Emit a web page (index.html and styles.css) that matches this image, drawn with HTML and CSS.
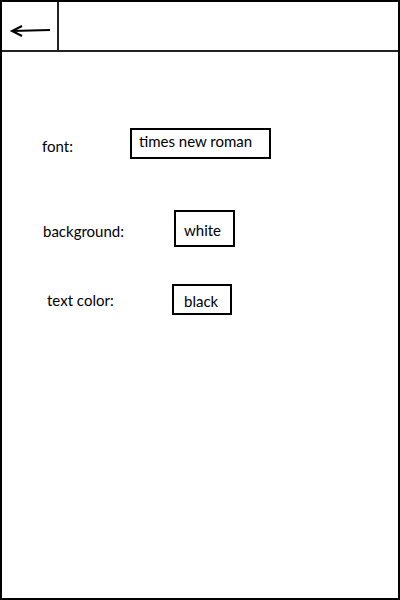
FILE: index.html
```html
<!DOCTYPE html>
<html lang="en">
<head>
    <meta charset="UTF-8">
    <meta name="viewport" content="width=device-width, initial-scale=1.0">
    <title>Settings</title>
    <link rel="stylesheet" href="styles.css">
</head>
<body>
    <div class="screen">
        <div class="topbar">
            <div class="back">
                <svg width="55" height="48" viewBox="0 0 55 48">
                    <line x1="10" y1="29" x2="48" y2="28" stroke="#000" stroke-width="2"/>
                    <polyline points="20,24 10,29 20,34" fill="none" stroke="#000" stroke-width="2"/>
                </svg>
            </div>
            <div class="title"></div>
        </div>
        <div class="content">
            <div class="row row-font">
                <span class="label">font:</span>
                <span class="box">times new roman</span>
            </div>
            <div class="row row-bg">
                <span class="label">background:</span>
                <span class="box">white</span>
            </div>
            <div class="row row-color">
                <span class="label">text color:</span>
                <span class="box">black</span>
            </div>
        </div>
    </div>
</body>
</html>
```

FILE: styles.css
```css
body {
    margin: 0;
    font-family: Lato, "Open Sans", sans-serif;
    font-size: 15px;
    line-height: 20px;
    color: #000;
}

.screen {
    width: 400px;
    height: 600px;
    box-sizing: border-box;
    border: 2px solid #000;
    background: #fff;
}

.topbar {
    display: flex;
    height: 50px;
    box-sizing: border-box;
    border-bottom: 2px solid #222;
}

.back {
    width: 57px;
    box-sizing: border-box;
    border-right: 2px solid #222;
}

.back svg {
    display: block;
}

.content {
    padding-top: 76px;
}

.row {
    display: flex;
    align-items: flex-start;
}

.box {
    box-sizing: border-box;
    border: 2px solid #000;
}

/* font */
.row-font .label {
    margin-left: 40px;
    margin-top: 8px;
    width: 88px;
}

.row-font .box {
    width: 141px;
    height: 31px;
    padding: 1px 0 0 7px;
}

/* background */
.row-bg {
    margin-top: 51px;
}

.row-bg .label {
    margin-left: 41px;
    margin-top: 11px;
    width: 131px;
}

.row-bg .box {
    width: 61px;
    height: 37px;
    padding: 8px 0 0 8px;
}

/* text color */
.row-color {
    margin-top: 37px;
}

.row-color .label {
    margin-left: 45px;
    margin-top: 6px;
    width: 125px;
}

.row-color .box {
    width: 60px;
    height: 31px;
    padding: 5px 0 0 10px;
}
```
